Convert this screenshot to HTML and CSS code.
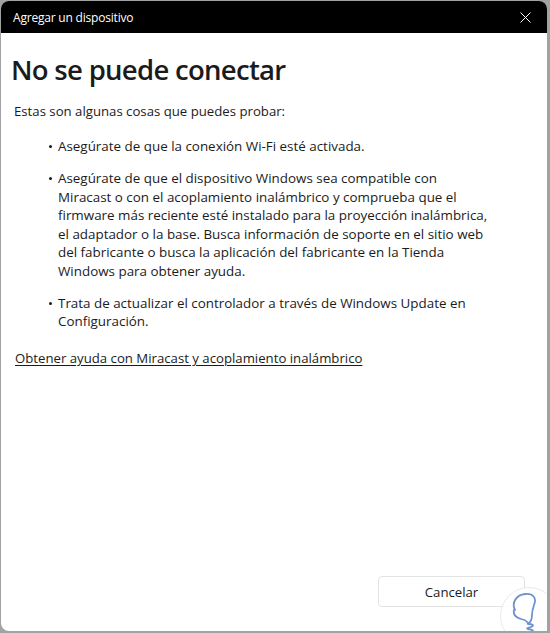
FILE: index.html
```html
<!DOCTYPE html>
<html lang="es">
  <head>
    <meta charset="UTF-8" />
    <meta name="viewport" content="width=device-width, initial-scale=1.0" />
    <title>Agregar un dispositivo</title>
    <link rel="stylesheet" href="styles.css">
  </head>
  <body>
    <div class="window">
      <!-- Title bar -->
      <div class="titlebar">
        <span class="title">Agregar un dispositivo</span>
        <button class="close" aria-label="Cerrar">
          <svg width="11" height="11" viewBox="0 0 11 11">
            <path d="M0.5 0.5 L10.5 10.5 M10.5 0.5 L0.5 10.5" stroke="#fff" stroke-width="1" fill="none" />
          </svg>
        </button>
      </div>

      <div class="content">
        <h1>No se puede conectar</h1>
        <p class="intro">Estas son algunas cosas que puedes probar:</p>

        <!-- line breaks follow the original dialog -->
        <ul class="tips">
          <li>Asegúrate de que la conexión Wi-Fi esté activada.</li>
          <li>Asegúrate de que el dispositivo Windows sea compatible con<br>
            Miracast o con el acoplamiento inalámbrico y comprueba que el<br>
            firmware más reciente esté instalado para la proyección inalámbrica,<br>
            el adaptador o la base. Busca información de soporte en el sitio web<br>
            del fabricante o busca la aplicación del fabricante en la Tienda<br>
            Windows para obtener ayuda.</li>
          <li>Trata de actualizar el controlador a través de Windows Update en<br>
            Configuración.</li>
        </ul>

        <a class="help-link" href="#">Obtener ayuda con Miracast y acoplamiento inalámbrico</a>
      </div>

      <div class="footer">
        <button class="cancel">Cancelar</button>
      </div>

      <!-- watermark -->
      <div class="badge">
        <svg width="56" height="56" viewBox="0 0 56 56">
          <path d="M14 22 C10 14 16 7 24 6 C32 5 36 10 33 17 C32 20 31 23 31 27 C31 31 30 34 27 36 C31 36 34 37 30 39 C27 40 25 40 27 41 C32 42 34 43 29 44 M13 22 C12 26 14 29 20 31 C24 32 27 33 27 36" stroke="#6f93cf" stroke-width="1.8" fill="none" stroke-linecap="round" stroke-linejoin="round" />
        </svg>
      </div>
    </div>
  </body>
</html>
```

FILE: styles.css
```css
* {
  box-sizing: border-box;
}

html,
body {
  height: 100%;
}

body {
  margin: 0;
  padding: 1px 3px 2px 1px;
  background: #a2a2a2;
  font-family: "Open Sans", "Noto Sans", sans-serif;
  color: #1b1b1b;
  overflow: hidden;
}

.window {
  position: relative;
  height: 630px;
  background: #fff;
  border-radius: 8px 8px 0 8px;
  overflow: hidden;
  display: flex;
  flex-direction: column;
}

.titlebar {
  height: 32px;
  background: #000;
  color: #fff;
  display: flex;
  align-items: center;
  justify-content: space-between;
  padding: 0 16px 0 12px;
  flex-shrink: 0;
}

.title {
  font-size: 12px;
  letter-spacing: -0.2px;
}

.close {
  background: none;
  border: none;
  padding: 0;
  display: flex;
  cursor: pointer;
}

.content {
  flex: 1;
  padding: 19px 10px 0 12px;
}

h1 {
  font-size: 27.5px;
  font-weight: 600;
  margin: 0 0 14px -2px;
  letter-spacing: -0.7px;
  line-height: 36px;
}

.intro {
  font-size: 13.2px;
  margin: 0 0 16px 1px;
  line-height: 19px;
}

.tips {
  list-style: none;
  margin: 0;
  padding: 0 0 0 45px;
  width: 534px;
  font-size: 13.4px;
  line-height: 18.5px;
}

.tips li {
  position: relative;
  margin-bottom: 13.5px;
}

.tips li::before {
  content: "";
  position: absolute;
  left: -9px;
  top: 8px;
  width: 3px;
  height: 3px;
  border-radius: 50%;
  background: #1b1b1b;
}

.help-link {
  display: inline-block;
  margin: 5px 0 0 2px;
  font-size: 13.2px;
  color: #1b1b1b;
  text-decoration: underline;
  text-underline-offset: 2px;
}

.footer {
  display: flex;
  justify-content: flex-end;
  padding: 0 22px 24px 0;
}

.cancel {
  width: 147px;
  height: 31px;
  background: #fff;
  border: 1px solid #e3e3e3;
  border-radius: 4px;
  font-family: inherit;
  font-size: 13.2px;
  color: #1b1b1b;
}

.badge {
  position: absolute;
  right: -11px;
  bottom: -14px;
  width: 58px;
  height: 58px;
  border-radius: 50%;
  background: rgba(255, 255, 255, 0.85);
  border: 1px solid #e6e9f0;
  display: flex;
  align-items: center;
  justify-content: center;
}
```
